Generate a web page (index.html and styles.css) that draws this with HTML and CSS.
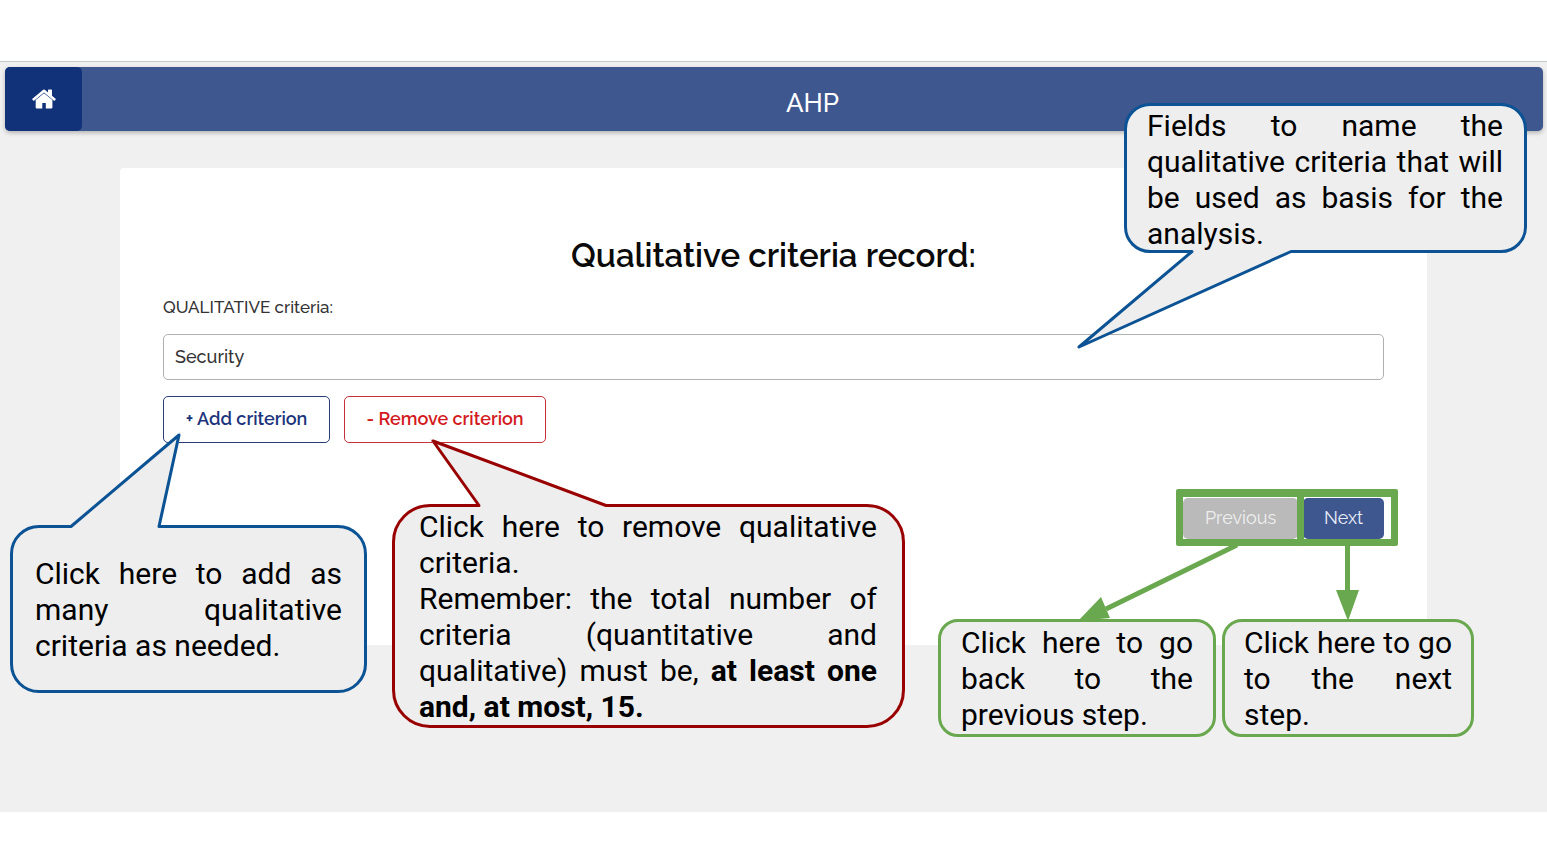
FILE: index.html
```html
<!DOCTYPE html>
<html lang="en">
<head>
<meta charset="utf-8">
<meta name="viewport" content="width=device-width, initial-scale=1">
<title>AHP</title>
<link rel="stylesheet" href="styles.css">
</head>
<body>
<div class="page">
  <div class="screen">
    <header class="topbar">
      <a class="home" href="#" aria-label="Home">
        <svg width="24" height="20" viewBox="0 0 24 20" aria-hidden="true">
          <path fill="#fff" d="M12 4.300 3.700 11.100V18.500a1 1 0 0 0 1 1H10.300V14h3.500v5.500h5.600a1 1 0 0 0 1-1V11.100z"/>
          <path fill="#fff" d="M23.600 9.700 20 6.700V1.200a.6.600 0 0 0-.6-.6h-2.800a.6.600 0 0 0-.6.600v2.200L13.400 1.200a2.200 2.200 0 0 0-2.800 0L.4 9.700a.6.600 0 0 0-.1.800l.9 1.100a.6.600 0 0 0 .8.100L12 3.400l10 8.300a.6.600 0 0 0 .8-.1l.9-1.100a.6.600 0 0 0-.1-.8z"/>
        </svg>
      </a>
      <h1 class="brand">AHP</h1>
    </header>

    <main class="card">
      <h2 class="title">Qualitative criteria record:</h2>
      <form class="form">
        <label class="label" for="criterion">QUALITATIVE criteria:</label>
        <input class="field" id="criterion" type="text" value="Security">
        <div class="actions">
          <button class="btn btn-add" type="button">+ Add criterion</button>
          <button class="btn btn-remove" type="button">- Remove criterion</button>
        </div>
        <div class="steps">
          <button class="step step-prev" type="button">Previous</button>
          <button class="step step-next" type="button">Next</button>
          <span class="frame frame-prev"></span>
          <span class="frame frame-next"></span>
        </div>
      </form>
    </main>
  </div>

  <svg class="arrows" width="310" height="90" viewBox="0 0 310 90" aria-hidden="true">
    <path d="M167 11 36 75M277.500 11v50" fill="none" stroke="#6aa84f" stroke-width="5"/>
    <path d="M8 87 31 63 40 84zM266 56h23l-11 31z" fill="#6aa84f"/>
  </svg>

  <aside class="callout blue note-field">
    <svg class="tail tail-field" width="220" height="104" viewBox="0 0 220 104" aria-hidden="true">
      <path class="tail-fill" d="M116 2V3L2 99 214 3V2z"/>
      <path class="tail-line" d="M112 3.500H115L2 99 214 3.500H218"/>
    </svg>
    <p>Fields to name the qualitative criteria that will be used as basis for the analysis.</p>
  </aside>

  <aside class="callout blue note-add">
    <svg class="tail tail-add" width="116" height="98" viewBox="0 0 116 98" aria-hidden="true">
      <path class="tail-fill" d="M5 95V94L112 2 92 94V95z"/>
      <path class="tail-line" d="M1 93.500H4L112 2 92 93.500H96"/>
    </svg>
    <p>Click here to add as many qualitative criteria as needed.</p>
  </aside>

  <aside class="callout red note-remove">
    <svg class="tail tail-remove" width="180" height="70" viewBox="0 0 180 70" aria-hidden="true">
      <path class="tail-fill" d="M48 68V67L2 2 175 67V68z"/>
      <path class="tail-line" d="M44 66.500H48L2 2 175 66.500H178"/>
    </svg>
    <p>Click here to remove qualitative criteria.</p>
    <p>Remember: the total number of criteria (quantitative and qualitative) must be, <b>at least one and, at most, 15.</b></p>
  </aside>

  <aside class="callout green note-prev">
    <p>Click here to go back to the previous step.</p>
  </aside>

  <aside class="callout green note-next">
    <p>Click here to go to the next step.</p>
  </aside>
</div>
</body>
</html>
```
FILE: styles.css
```css
* {
  box-sizing: border-box;
}

body {
  margin: 0;
  background: #fff;
  font-family: Raleway, Lato, "Open Sans", sans-serif;
}

.page {
  position: relative;
  padding: 61px 0 54px;
}

.screen {
  padding: 5px 4px 167px 5px;
  border-top: 1px solid #c3c8c8;
  background: #f0f0f0;
}

.topbar {
  display: flex;
  border-radius: 5px;
  background: #3f578f;
  box-shadow: 0 2px 4px rgba(0, 0, 0, 0.25);
}

.home {
  display: flex;
  align-items: center;
  justify-content: center;
  width: 77px;
  height: 64px;
  border-radius: 5px;
  background: #113279;
}

.brand {
  flex: 1;
  margin: 0;
  padding-top: 8px;
  color: #fff;
  font-size: 26px;
  font-weight: 500;
  line-height: 56px;
  text-align: center;
}

.card {
  margin: 37px 116px 0 115px;
  padding: 66px 43px 106px;
  border-radius: 4px;
  background: #fff;
}

.title {
  margin: 0;
  color: #0a0a0a;
  font-size: 33px;
  font-weight: 600;
  line-height: 44px;
  text-align: center;
}

.form {
  display: flex;
  flex-direction: column;
}

.label {
  margin: 17px 0 15px;
  color: #333;
  font-size: 17px;
  font-weight: 500;
  line-height: 24px;
}

.field {
  width: 100%;
  height: 46px;
  padding: 0 11px 2px;
  border: 1px solid #b0b0b0;
  border-radius: 5px;
  background: #fff;
  color: #333;
  font-family: inherit;
  font-size: 18px;
  font-weight: 500;
}

.actions {
  display: flex;
  gap: 14px;
  margin-top: 16px;
}

.btn {
  height: 47px;
  padding-bottom: 4px;
  border: 1px solid;
  border-radius: 5px;
  background: #fff;
  font-family: inherit;
  font-size: 18px;
  font-weight: 600;
}

.btn-add {
  width: 167px;
  border-color: #2b3d76;
  color: #1b347c;
}

.btn-remove {
  width: 202px;
  border-color: #c5303a;
  color: #d31a20;
}

.steps {
  position: relative;
  display: flex;
  gap: 5px;
  align-self: flex-end;
  margin-top: 55px;
}

.step {
  height: 41px;
  padding-bottom: 4px;
  border: 0;
  border-radius: 5px;
  font-family: inherit;
  font-size: 18px;
  font-weight: 400;
}

.step-prev {
  width: 115px;
  background: #bababa;
  color: #efefef;
}

.step-next {
  width: 81px;
  background: #3f578f;
  color: #e8edf8;
}

.frame {
  position: absolute;
  top: -9px;
  bottom: -7px;
  border: solid #6aa84f;
  border-width: 8px 7px 7px;
  border-radius: 2px;
}

.frame-prev {
  left: -7px;
  right: 80px;
}

.frame-next {
  left: 114px;
  right: -14px;
}

.callout {
  position: absolute;
  border: 3px solid;
  background: #eee;
  font-family: Roboto, sans-serif;
  font-size: 30px;
  line-height: 36px;
  text-align: justify;
}

.callout p {
  position: relative;
  margin: 0;
  color: #000;
}

.blue {
  border-color: #0b5394;
  color: #0b5394;
}

.red {
  border-color: #990000;
  color: #990000;
}

.green {
  border-color: #6aa84f;
  color: #6aa84f;
}

.note-field {
  top: 103px;
  right: 20px;
  width: 403px;
  height: 150px;
  padding: 2px 21px 0 20px;
  border-radius: 26px;
}

.note-add {
  top: 525px;
  left: 10px;
  width: 357px;
  height: 168px;
  padding: 28px 22px 0;
  border-radius: 29px;
}

.note-remove {
  top: 504px;
  left: 392px;
  width: 513px;
  height: 224px;
  padding: 2px 25px 0 24px;
  border-radius: 38px;
}

.note-prev {
  top: 619px;
  right: 331px;
  width: 278px;
  height: 118px;
  padding: 3px 20px 0;
  border-radius: 20px;
}

.note-next {
  top: 619px;
  right: 73px;
  width: 252px;
  height: 118px;
  padding: 3px 19px 0;
  border-radius: 20px;
}

.tail {
  position: absolute;
  overflow: visible;
}

.tail-fill {
  fill: #eee;
  stroke: #eee;
  stroke-width: 3;
}

.tail-line {
  fill: none;
  stroke: currentColor;
  stroke-width: 3;
  stroke-linejoin: round;
}

.tail-field {
  top: 142px;
  left: -50px;
}

.tail-add {
  top: -95px;
  left: 54px;
}

.tail-remove {
  top: -68px;
  left: 36px;
}

.arrows {
  position: absolute;
  top: 534px;
  right: 167px;
}
```
